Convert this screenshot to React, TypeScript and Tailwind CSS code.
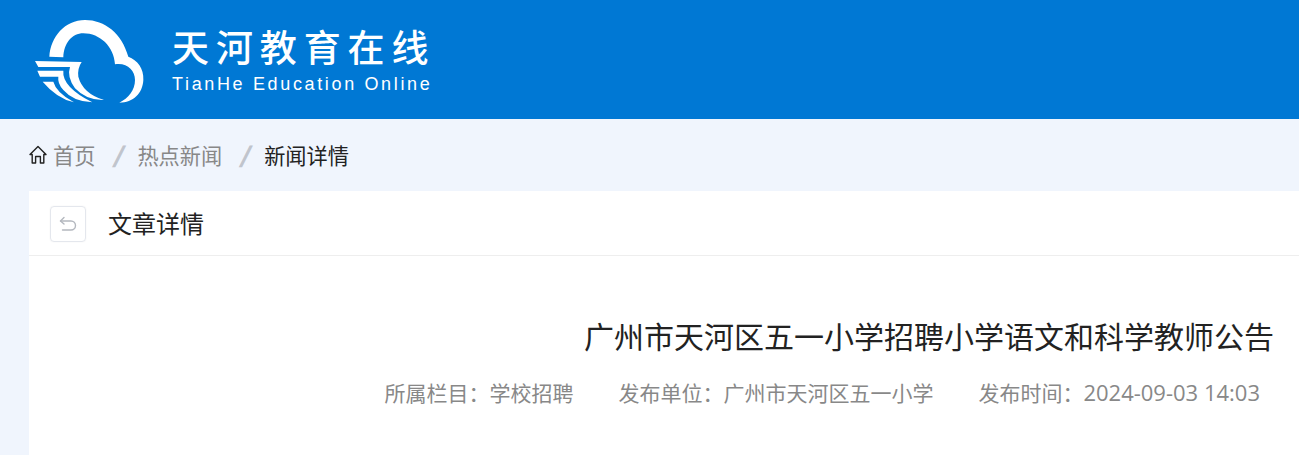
const FONT = "font-['Noto_Sans_CJK_SC','Liberation_Sans',sans-serif]";

function Logo() {
  return (
    <svg viewBox="0 0 420 330" className="w-[140px] h-[110px] shrink-0" fill="#fff">
      <path d="M88 155 C92 95 135 45 195 45 C255 45 305 85 325 155 C352 165 372 190 370 225 C368 265 340 293 298 293 C325 280 345 255 345 225 C345 195 320 172 285 178 C282 125 240 85 190 85 C155 85 132 115 130 157 Z" />
      <path d="M45 168 L185 171 Q172 190 175 215 Q188 265 252 285 Q200 287 165 250 Q140 215 150 186 L55 186 Z" />
      <path d="M52 197 L130 197 Q125 245 217 292 Q160 290 130 255 Q112 235 115 215 L60 215 Z" />
      <path d="M68 230 L100 230 Q108 262 162 292 Q110 280 68 230 Z" />
    </svg>
  );
}

function HomeIcon() {
  return (
    <svg viewBox="0 0 18 20" className="w-[18px] h-[20px]" fill="none" stroke="#222" strokeWidth="1.4" strokeLinejoin="round">
      <path d="M1 9.5 L9 1.5 L17 9.5 L14.8 9.5 L14.8 18 L11.4 18 L11.4 11.5 L6.6 11.5 L6.6 18 L3.2 18 L3.2 9.5 Z" />
    </svg>
  );
}

function BackIcon() {
  return (
    <svg viewBox="0 0 18 18" className="w-[18px] h-[18px]" fill="none" stroke="#b4b8bf" strokeWidth="1.4" strokeLinecap="round" strokeLinejoin="round">
      <path d="M5 2.5 L1.5 6 L5 9" />
      <path d="M1.5 6 H12 C14.5 6 16.5 8 16.5 10.5 C16.5 13 14.5 15 12 15 H3.5" />
    </svg>
  );
}

function Sep() {
  return (
    <span className="ml-[18px] mr-[14px] w-[10px] text-[21px] font-bold italic text-[#c0c4cc] [-webkit-text-stroke:1px_#c0c4cc]">
      /
    </span>
  );
}

export default function App() {
  return (
    <div className={`h-[455px] overflow-hidden bg-[#f0f5fd] ${FONT}`}>
      <header className="h-[119px] bg-[#0078d4] flex items-center pl-[20px]">
        <Logo />
        <div className="ml-[12px] flex flex-col text-white">
          <div className="text-[37px] leading-[42px] font-medium tracking-[6.9px] whitespace-nowrap">天河教育在线</div>
          <div className="mt-[6px] text-[18px] leading-[22px] tracking-[2.65px] font-['Liberation_Sans',sans-serif] whitespace-nowrap">TianHe Education Online</div>
        </div>
      </header>

      <nav className="h-[72px] flex items-center pl-[29px] text-[21.2px] text-[#888888]">
        <HomeIcon />
        <span className="ml-[6px]">首页</span>
        <Sep />
        <span>热点新闻</span>
        <Sep />
        <span className="text-[#222]">新闻详情</span>
      </nav>

      <main className="ml-[29px] bg-white h-[400px]">
        <div className="h-[65px] border-b border-[#eeeeee] flex items-center pl-[21px]">
          <button className="mt-[2px] w-[36px] h-[36px] border border-[#e4e7ed] rounded flex items-center justify-center shadow-[0_0_2px_rgba(0,0,0,0.06)]">
            <BackIcon />
          </button>
          <h2 className="ml-[22px] text-[24px] text-[#222]">文章详情</h2>
        </div>
        <div className="pt-[57px] flex flex-col items-end">
          <h1 className="pr-[25px] text-[30px] leading-[44px] text-[#222] whitespace-nowrap">广州市天河区五一小学招聘小学语文和科学教师公告</h1>
          <div className="mt-[15px] pr-[39px] flex gap-[45px] text-[21px] leading-[40px] text-[#888888] whitespace-nowrap">
            <span>所属栏目：学校招聘</span>
            <span>发布单位：广州市天河区五一小学</span>
            <span>发布时间：<span className="font-['Open_Sans',sans-serif] text-[22px]">2024-09-03 14:03</span></span>
          </div>
        </div>
      </main>
    </div>
  );
}
